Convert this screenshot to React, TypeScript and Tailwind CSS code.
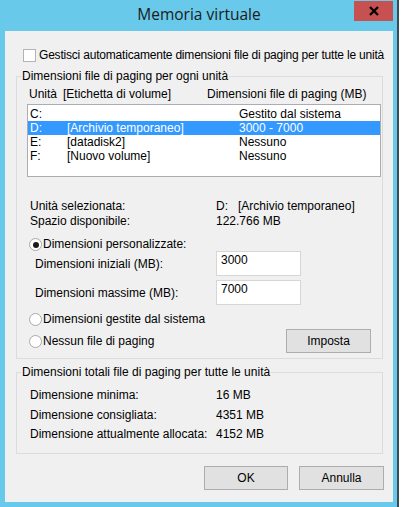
import React from "react";

function Radio({ checked, label }: { checked?: boolean; label: string }) {
  return (
    <div className="flex items-center h-[13px] ml-[12px]">
      <span className="w-[13px] h-[13px] rounded-full border border-[#a9a9a9] bg-white flex items-center justify-center">
        {checked && <span className="w-[6px] h-[6px] rounded-full bg-[#1a1a1a]" />}
      </span>
      <span className="ml-[1px]">{label}</span>
    </div>
  );
}

function Field({ value }: { value: string }) {
  return (
    <div className="w-[85px] h-[25px] bg-white border border-[#d6d6d6] pl-[4px] pt-[2px]">{value}</div>
  );
}

function Btn({ label, w }: { label: string; w: string }) {
  return (
    <div className={`${w} h-[24px] bg-[#e1e1e1] border border-[#adadad] flex items-center justify-center`}>
      {label}
    </div>
  );
}

const drives = [
  { d: "C:", label: "", size: "Gestito dal sistema" },
  { d: "D:", label: "[Archivio temporaneo]", size: "3000 - 7000", sel: true },
  { d: "E:", label: "[datadisk2]", size: "Nessuno" },
  { d: "F:", label: "[Nuovo volume]", size: "Nessuno" },
];

export default function App() {
  return (
    <div className="w-[402px] h-[507px] bg-white">
      <div className="w-[399px] h-[507px] bg-[#68c9ea] border-r-2 border-[#3f4a50] flex flex-col pl-[5px] pr-[4px] pb-[5px]">
        {/* Title bar */}
        <div className="relative h-[31px] flex items-center justify-center">
          <span className="font-['Open_Sans',sans-serif] text-[15.5px] text-[#1b1b1b] pb-[1px]">Memoria virtuale</span>
          <div className="absolute right-0 top-[1px] w-[39px] h-[20px] bg-[#c75050] flex items-center justify-center">
            <svg width="10" height="10" viewBox="0 0 10 10">
              <path d="M1 1 L9 9 M9 1 L1 9" stroke="#000" strokeWidth="2.3" />
            </svg>
          </div>
        </div>

        {/* Dialog body */}
        <div className="flex-1 bg-[#f0f0f0] text-[12px] leading-[13px] text-black whitespace-nowrap font-['Liberation_Sans',Arial,sans-serif] pt-[18px]">
          <div className="flex items-center h-[13px] ml-[18px]">
            <span className="w-[13px] h-[13px] shrink-0 bg-white border border-[#b4b4b4]" />
            <span className="ml-[3px] tracking-[-0.2px]">Gestisci automaticamente dimensioni file di paging per tutte le unità</span>
          </div>

          <fieldset className="mt-[8px] ml-[11px] w-[367px] border border-[#dcdcdc] pb-[5px]">
            <legend className="ml-[4px] px-[1px]">Dimensioni file di paging per ogni unità</legend>
            <div className="flex h-[13px] mt-[5px]">
              <span className="ml-[12px] w-[34px]">Unità</span>
              <span className="w-[144px]">[Etichetta di volume]</span>
              <span>Dimensioni file di paging (MB)</span>
            </div>
            <div className="mt-[3px] ml-[10px] w-[354px] h-[73px] bg-white border border-[#abadb3] pt-[2px]">
              {drives.map((r) => (
                <div
                  key={r.d}
                  className={`flex h-[14px] items-center pl-[2px] ${r.sel ? "bg-[#3399ff] text-white" : ""}`}
                >
                  <span className="w-[37px]">{r.d}</span>
                  <span className="w-[172px]">{r.label}</span>
                  <span>{r.size}</span>
                </div>
              ))}
            </div>

            <div className="mt-[23px] flex h-[15px] ml-[13px]">
              <span className="w-[186px]">Unità selezionata:</span>
              <span className="w-[22px]">D:</span>
              <span>[Archivio temporaneo]</span>
            </div>
            <div className="flex h-[13px] ml-[13px]">
              <span className="w-[186px]">Spazio disponibile:</span>
              <span>122.766 MB</span>
            </div>

            <div className="mt-[10px]">
              <Radio checked label="Dimensioni personalizzate:" />
            </div>
            <div className="flex ml-[18px]">
              <span className="w-[181px] pt-[7px]">Dimensioni iniziali (MB):</span>
              <Field value="3000" />
            </div>
            <div className="flex ml-[18px] mt-[4px]">
              <span className="w-[181px] pt-[7px]">Dimensioni massime (MB):</span>
              <Field value="7000" />
            </div>
            <div className="mt-[8px]">
              <Radio label="Dimensioni gestite dal sistema" />
            </div>
            <div className="mt-[3px] flex items-center justify-between pr-[11px]">
              <Radio label="Nessun file di paging" />
              <Btn label="Imposta" w="w-[85px]" />
            </div>
          </fieldset>

          <fieldset className="mt-[7px] ml-[11px] w-[367px] border border-[#dcdcdc] pb-[12px]">
            <legend className="ml-[4px] px-[1px]">Dimensioni totali file di paging per tutte le unità</legend>
            <div className="mt-[10px] ml-[13px] flex flex-col">
              <div className="flex h-[19.5px]">
                <span className="w-[186px]">Dimensione minima:</span>
                <span>16 MB</span>
              </div>
              <div className="flex h-[19.5px]">
                <span className="w-[186px]">Dimensione consigliata:</span>
                <span>4351 MB</span>
              </div>
              <div className="flex h-[13px]">
                <span className="w-[186px]">Dimensione attualmente allocata:</span>
                <span>4152 MB</span>
              </div>
            </div>
          </fieldset>

          <div className="mt-[12px] flex justify-end gap-[11px] pr-[9px]">
            <Btn label="OK" w="w-[84px]" />
            <Btn label="Annulla" w="w-[85px]" />
          </div>
        </div>
      </div>
    </div>
  );
}
